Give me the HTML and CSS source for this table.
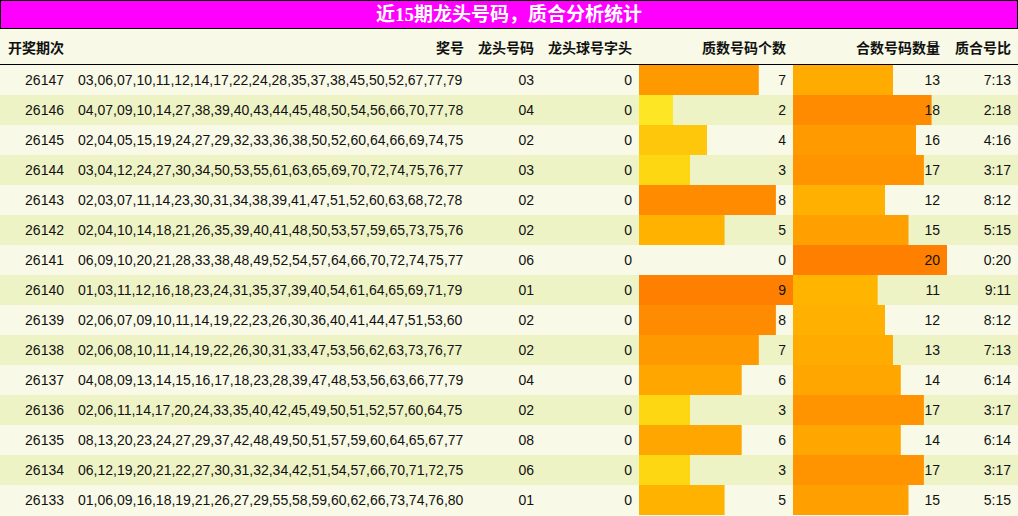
FILE: index.html
```html
<!DOCTYPE html>
<html lang="zh">
<head>
<meta charset="utf-8">
<title>近15期龙头号码，质合分析统计</title>
<link rel="stylesheet" href="styles.css">
</head>
<body>
<div class="board">
  <div class="title">近15期龙头号码，质合分析统计</div>
  <div class="row head">
    <div class="c">开奖期次</div>
    <div class="c r">奖号</div>
    <div class="c r">龙头号码</div>
    <div class="c r">龙头球号字头</div>
    <div class="c r">质数号码个数</div>
    <div class="c r">合数号码数量</div>
    <div class="c r">质合号比</div>
  </div>
  <div class="row odd"><div class="c r">26147</div><div class="c">03,06,07,10,11,12,14,17,22,24,28,35,37,38,45,50,52,67,77,79</div><div class="c r">03</div><div class="c r">0</div><div class="c r bar" style="--w:119.8px;--c:#ff9900">7</div><div class="c r bar" style="--w:100.1px;--c:#ffab00">13</div><div class="c r">7:13</div></div>
  <div class="row even"><div class="c r">26146</div><div class="c">04,07,09,10,14,27,38,39,40,43,44,45,48,50,54,56,66,70,77,78</div><div class="c r">04</div><div class="c r">0</div><div class="c r bar" style="--w:34.2px;--c:#fde725">2</div><div class="c r bar" style="--w:138.6px;--c:#ff8c00">18</div><div class="c r">2:18</div></div>
  <div class="row odd"><div class="c r">26145</div><div class="c">02,04,05,15,19,24,27,29,32,33,36,38,50,52,60,64,66,69,74,75</div><div class="c r">02</div><div class="c r">0</div><div class="c r bar" style="--w:68.4px;--c:#ffc70c">4</div><div class="c r bar" style="--w:123.2px;--c:#ff9a00">16</div><div class="c r">4:16</div></div>
  <div class="row even"><div class="c r">26144</div><div class="c">03,04,12,24,27,30,34,50,53,55,61,63,65,69,70,72,74,75,76,77</div><div class="c r">03</div><div class="c r">0</div><div class="c r bar" style="--w:51.3px;--c:#fdd712">3</div><div class="c r bar" style="--w:130.9px;--c:#ff9300">17</div><div class="c r">3:17</div></div>
  <div class="row odd"><div class="c r">26143</div><div class="c">02,03,07,11,14,23,30,31,34,38,39,41,47,51,52,60,63,68,72,78</div><div class="c r">02</div><div class="c r">0</div><div class="c r bar" style="--w:136.9px;--c:#ff8c00">8</div><div class="c r bar" style="--w:92.4px;--c:#ffb000">12</div><div class="c r">8:12</div></div>
  <div class="row even"><div class="c r">26142</div><div class="c">02,04,10,14,18,21,26,35,39,40,41,48,50,53,57,59,65,73,75,76</div><div class="c r">02</div><div class="c r">0</div><div class="c r bar" style="--w:85.6px;--c:#ffb300">5</div><div class="c r bar" style="--w:115.5px;--c:#ffa000">15</div><div class="c r">5:15</div></div>
  <div class="row odd"><div class="c r">26141</div><div class="c">06,09,10,20,21,28,33,38,48,49,52,54,57,64,66,70,72,74,75,77</div><div class="c r">06</div><div class="c r">0</div><div class="c r bar" style="--w:0px;--c:transparent">0</div><div class="c r bar" style="--w:154px;--c:#ff8000">20</div><div class="c r">0:20</div></div>
  <div class="row even"><div class="c r">26140</div><div class="c">01,03,11,12,16,18,23,24,31,35,37,39,40,54,61,64,65,69,71,79</div><div class="c r">01</div><div class="c r">0</div><div class="c r bar" style="--w:154px;--c:#ff8000">9</div><div class="c r bar" style="--w:84.7px;--c:#ffb500">11</div><div class="c r">9:11</div></div>
  <div class="row odd"><div class="c r">26139</div><div class="c">02,06,07,09,10,11,14,19,22,23,26,30,36,40,41,44,47,51,53,60</div><div class="c r">02</div><div class="c r">0</div><div class="c r bar" style="--w:136.9px;--c:#ff8c00">8</div><div class="c r bar" style="--w:92.4px;--c:#ffb000">12</div><div class="c r">8:12</div></div>
  <div class="row even"><div class="c r">26138</div><div class="c">02,06,08,10,11,14,19,22,26,30,31,33,47,53,56,62,63,73,76,77</div><div class="c r">02</div><div class="c r">0</div><div class="c r bar" style="--w:119.8px;--c:#ff9900">7</div><div class="c r bar" style="--w:100.1px;--c:#ffab00">13</div><div class="c r">7:13</div></div>
  <div class="row odd"><div class="c r">26137</div><div class="c">04,08,09,13,14,15,16,17,18,23,28,39,47,48,53,56,63,66,77,79</div><div class="c r">04</div><div class="c r">0</div><div class="c r bar" style="--w:102.7px;--c:#ffa600">6</div><div class="c r bar" style="--w:107.8px;--c:#ffa600">14</div><div class="c r">6:14</div></div>
  <div class="row even"><div class="c r">26136</div><div class="c">02,06,11,14,17,20,24,33,35,40,42,45,49,50,51,52,57,60,64,75</div><div class="c r">02</div><div class="c r">0</div><div class="c r bar" style="--w:51.3px;--c:#fdd712">3</div><div class="c r bar" style="--w:130.9px;--c:#ff9300">17</div><div class="c r">3:17</div></div>
  <div class="row odd"><div class="c r">26135</div><div class="c">08,13,20,23,24,27,29,37,42,48,49,50,51,57,59,60,64,65,67,77</div><div class="c r">08</div><div class="c r">0</div><div class="c r bar" style="--w:102.7px;--c:#ffa600">6</div><div class="c r bar" style="--w:107.8px;--c:#ffa600">14</div><div class="c r">6:14</div></div>
  <div class="row even"><div class="c r">26134</div><div class="c">06,12,19,20,21,22,27,30,31,32,34,42,51,54,57,66,70,71,72,75</div><div class="c r">06</div><div class="c r">0</div><div class="c r bar" style="--w:51.3px;--c:#fdd712">3</div><div class="c r bar" style="--w:130.9px;--c:#ff9300">17</div><div class="c r">3:17</div></div>
  <div class="row odd"><div class="c r">26133</div><div class="c">01,06,09,16,18,19,21,26,27,29,55,58,59,60,62,66,73,74,76,80</div><div class="c r">01</div><div class="c r">0</div><div class="c r bar" style="--w:85.6px;--c:#ffb300">5</div><div class="c r bar" style="--w:115.5px;--c:#ffa000">15</div><div class="c r">5:15</div></div>
</div>
</body>
</html>
```
FILE: styles.css
```css
html, body {
  margin: 0;
  padding: 0;
  background: #f8f9e6;
}
.board {
  width: 1018px;
  font-family: "Liberation Sans", "Noto Sans CJK SC", sans-serif;
  font-size: 14px;
  color: #111;
}
.title {
  box-sizing: border-box;
  height: 29px;
  border: 1px solid #000;
  background: #ff00ff;
  color: #fff;
  font-family: "Liberation Serif", "Noto Sans CJK SC", serif;
  font-weight: bold;
  font-size: 19px;
  line-height: 27px;
  text-align: center;
}
.row {
  display: grid;
  grid-template-columns: 71px 400px 70px 98px 154px 154px 71px;
  height: 30px;
  align-items: stretch;
}
.row.head {
  height: 35px;
  border-bottom: 1px solid #000;
  font-weight: bold;
  color: #111;
  background: #f8f9e6;
}
.row.odd { background: #f8f9e6; }
.row.even { background: #eef3c6; }
.c {
  padding: 0 7px;
  display: flex;
  align-items: center;
  white-space: nowrap;
}
.head .c:first-child { padding-left: 8px; }
.r { justify-content: flex-end; }
.bar {
  background-image: linear-gradient(var(--c), var(--c));
  background-size: var(--w) 100%;
  background-repeat: no-repeat;
}
```
